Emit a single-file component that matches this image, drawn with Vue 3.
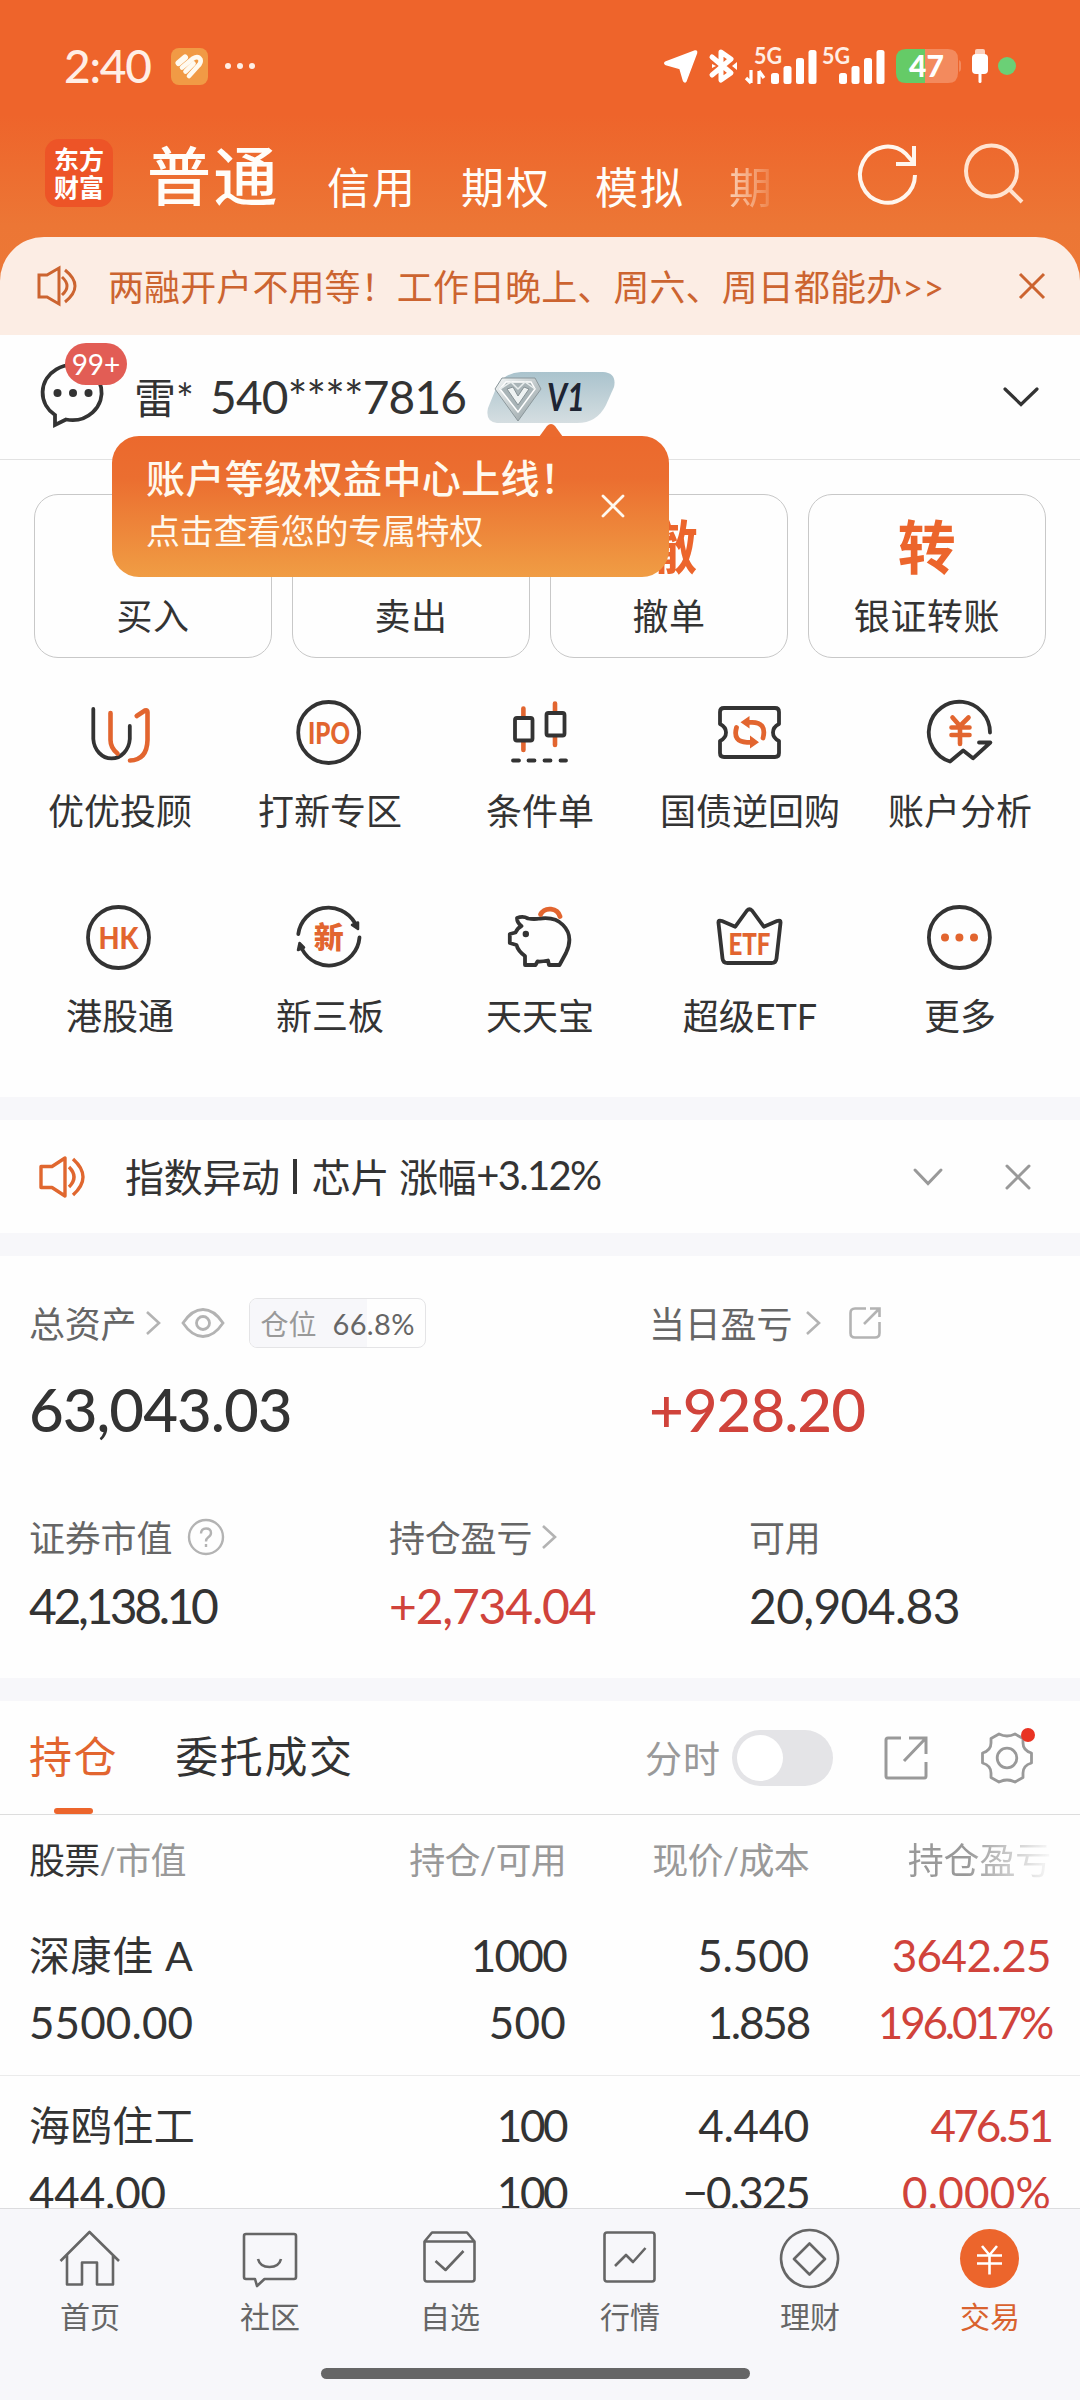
<template>
    <div class="page">
        <div class="top">
            <div class="status-bar">
                <span class="clock">2:40</span>
                <svg class="app-chip" width="37" height="37" viewBox="0 0 37 37">
                    <rect width="37" height="37" rx="8" fill="#f19a45" />
                    <g stroke="#fffaf0" stroke-width="4.6" stroke-linecap="round" fill="none">
                        <path d="M7.5 15 L14 9.5" stroke-width="6" />
                        <path d="M11 19.5 L22 10.5 Q27 7.500 29.500 11.500 Q30.500 15 27 18 L18 28" />
                        <path d="M14.500 23.500 L22.500 15.500" />
                    </g>
                </svg>
                <span class="dots"><i></i><i></i><i></i></span>
                <div class="spacer"></div>
                <svg width="36" height="36" viewBox="0 0 36 36">
                    <path d="M3 14 L32 3 Q34 2.500 33.500 5 L23 33 Q21.500 35 20.500 32.500 L17 20.500 L3 16.500 Q0.500 15 3 14Z" fill="#fff" stroke="#fff" stroke-width="1.500" />
                </svg>
                <svg class="bt" width="28" height="36" viewBox="0 0 28 36">
                    <path d="M3 9 L22 25 L12 32 V4 L22 11 L3 27" fill="none" stroke="#fff" stroke-width="5" stroke-linejoin="round" stroke-linecap="round" />
                    <path d="M3 16 l4 2 l-4 2z M28 14 v8 l-5 -4z" fill="#fff" />
                </svg>
                <svg class="signal" width="70" height="38" viewBox="0 0 70 38">
                    <text x="8" y="16.500" textLength="28" lengthAdjust="spacingAndGlyphs" class="net">5G</text>
                    <path d="M5 23 V36 M0 31 L5 36 M13 37 V24 M13 24 L18 31" stroke="#fff" stroke-width="3.200" fill="none" />
                    <g fill="#fff">
                        <rect v-for="b in bars" :key="b.x" :x="b.x + 25" :y="37 - b.h" width="8" :height="b.h" rx="2.500" />
                    </g>
                </svg>
                <svg class="signal second" width="63" height="38" viewBox="0 0 63 38">
                    <text x="0" y="16.500" textLength="28" lengthAdjust="spacingAndGlyphs" class="net">5G</text>
                    <g fill="#fff">
                        <rect v-for="b in bars" :key="b.x" :x="b.x + 17" :y="37 - b.h" width="8" :height="b.h" rx="2.500" />
                    </g>
                </svg>
                <svg class="battery" width="65" height="34" viewBox="0 0 65 34">
                    <path d="M29 0 H52 Q62 0 62 10 V24 Q62 34 52 34 H29Z M63 11 q2 1 2 3 v6 q0 2 -2 3z" fill="#f38a5d" />
                    <path d="M10 0 H29 V34 H10 Q0 34 0 24 V10 Q0 0 10 0Z" fill="#65cb67" />
                    <text x="13" y="27.500" textLength="35" lengthAdjust="spacingAndGlyphs" class="level">47</text>
                </svg>
                <svg class="plug" width="16" height="34" viewBox="0 0 16 34">
                    <rect x="3" y="0" width="10" height="7" rx="2" fill="#fbd0bd" />
                    <rect x="0" y="5" width="16" height="20" rx="4" fill="#fff" />
                    <rect x="6.500" y="24" width="3" height="10" rx="1.500" fill="#fff" />
                </svg>
                <span class="privacy"></span>
            </div>

            <div class="nav">
                <div class="logo"><span>东方</span><span>财富</span></div>
                <div class="modes">
                    <span class="mode active">普通</span>
                    <span v-for="m in modes" :key="m" class="mode">{{ m }}</span>
                    <span class="mode faded">期</span>
                </div>
                <div class="spacer"></div>
                <svg width="60" height="60" viewBox="0 0 60 60" fill="none" stroke="#fff6ee" stroke-width="4">
                    <path d="M57 31 A27.500 28 0 1 1 47.500 9.500 L55 18" />
                    <path d="M56 2 V20 H38" />
                </svg>
                <svg class="search" width="60" height="60" viewBox="0 0 60 60" fill="none" stroke="#ffe3d0" stroke-width="4">
                    <circle cx="27.500" cy="27" r="25.500" />
                    <path d="M45 45 L58 58" />
                </svg>
            </div>

            <div class="promo">
                <svg width="40" height="40" viewBox="0 0 40 40" fill="none" stroke="#cc6430" stroke-width="3">
                    <path d="M2 9 H10 L22 2 V38 L10 31 H2Z" />
                    <path d="M25 11 Q35 20 25 29 M28 4 Q48 20 28 36" />
                </svg>
                <span class="promo-text">两融开户不用等！工作日晚上、周六、周日都能办&gt;&gt;</span>
                <div class="spacer"></div>
                <svg width="26" height="26" viewBox="0 0 26 26" stroke="#cc6430" stroke-width="3">
                    <path d="M1 1 L25 25 M25 1 L1 25" />
                </svg>
            </div>
        </div>

        <div class="account">
            <div class="message">
                <svg width="64" height="64" viewBox="0 0 64 64">
                    <path d="M14 60 V50 A29.500 27.500 0 1 1 25 54.500 Z" fill="none" stroke="#333" stroke-width="3.800" stroke-linejoin="miter" />
                    <g fill="#333"><circle cx="16.500" cy="28" r="4" /><circle cx="32" cy="28" r="4" /><circle cx="47.500" cy="28" r="4" /></g>
                </svg>
                <span class="count">99+</span>
            </div>
            <span class="owner">雷*</span>
            <span class="number">540****7816</span>
            <svg class="vip" width="128" height="51" viewBox="0 0 128 51">
                <defs>
                    <linearGradient id="vipBg" x1="0" y1="0" x2="0" y2="1">
                        <stop offset="0" stop-color="#aac3cd" /><stop offset="1" stop-color="#d5dee1" />
                    </linearGradient>
                    <linearGradient id="gem" x1="0" y1="0" x2="1" y2="1">
                        <stop offset="0" stop-color="#f5f8f8" /><stop offset="1" stop-color="#8e9b9f" />
                    </linearGradient>
                </defs>
                <path d="M34 0H116Q130 1 127 15L119 33Q110 51 90 51H10Q-2 50 1 36L10 14Q17 1 34 0Z" fill="url(#vipBg)" />
                <path d="M15 6 H48 L54 17 L31 49 L8 17Z" fill="url(#gem)" stroke="#8b979b" stroke-width="1" />
                <path d="M19 10 H44 L48 17 L31 40 L13 17Z" fill="#a9b4b7" stroke="#fff" stroke-width="1.500" />
                <path d="M13 17 L24 10 L31 17 L38 10 L48 17" fill="none" stroke="#e9eeee" stroke-width="1.500" />
                <path d="M20 17 L26 15 L31 24 L37 15 L42 17 L31 33Z" fill="#eef2f2" stroke="#879296" stroke-width="1" />
                <text x="60" y="39" textLength="38" lengthAdjust="spacingAndGlyphs" class="vip-text">V1</text>
            </svg>
            <div class="spacer"></div>
            <svg width="36" height="20" viewBox="0 0 36 20" fill="none" stroke="#333" stroke-width="3.200" stroke-linecap="round">
                <path d="M2 2 L18 17.500 L34 2" />
            </svg>
            <div class="tip">
                <svg class="tip-arrow" width="24" height="13" viewBox="0 0 24 13"><path d="M0 13 L8 2 Q12 -2 16 2 L24 13Z" fill="#eb6a2e" /></svg>
                <div>
                    <div class="tip-title">账户等级权益中心上线！</div>
                    <div class="tip-sub">点击查看您的专属特权</div>
                </div>
                <svg class="tip-close" width="24" height="24" viewBox="0 0 24 24" stroke="#fff8ee" stroke-width="2.800" stroke-linecap="round">
                    <path d="M2 2 L22 22 M22 2 L2 22" />
                </svg>
            </div>
        </div>

        <div class="trades">
            <div v-for="t in trades" :key="t.label" class="trade">
                <b>{{ t.mark }}</b>
                <span>{{ t.label }}</span>
            </div>
        </div>

        <div class="tools">
            <div v-for="tool in tools" :key="tool.id" class="tool">
                <svg width="72" height="72" viewBox="0 0 72 72" fill="none" stroke="#333" stroke-width="3.800" stroke-linecap="round" stroke-linejoin="round">
                    <template v-if="tool.id === 'advisor'">
                        <path d="M10.300 13 V43 A18.300 21 0 0 0 46.800 43 V30" />
                        <path class="hot" stroke-width="4.600" d="M27.500 17 V44 Q27.500 52 34.500 57.500 M53.700 20 L62 14.500 Q64.500 13.500 64.500 16 V44 Q64 64 47 64.500" />
                    </template>
                    <template v-else-if="tool.id === 'ipo'">
                        <circle cx="35.700" cy="36.500" r="30.500" />
                        <text x="36" y="47.500" textLength="42" lengthAdjust="spacingAndGlyphs" class="glyph">IPO</text>
                    </template>
                    <template v-else-if="tool.id === 'cond'">
                        <path class="hot" stroke-width="4.600" d="M20.400 12.500 V20 M20.400 46 V54 M52 7.500 V15 M52 41 V49" />
                        <rect x="12" y="22" width="17.500" height="22.500" rx="2" />
                        <rect x="43.500" y="17" width="18" height="22.500" rx="2" />
                        <path d="M10 64.500 H16 M25.500 64.500 H31.500 M41.500 64.500 H47.500 M57.500 64.500 H63" />
                    </template>
                    <template v-else-if="tool.id === 'repo'">
                        <path d="M11 12 H62 Q66 12 66 16 V28 Q60 31 60 36.500 Q60 42 66 45 V57 Q66 61 62 61 H11 Q7 61 7 57 V45 Q13 42 13 36.500 Q13 31 7 28 V16 Q7 12 11 12Z" />
                        <path class="hot" stroke-width="4.800" d="M23.500 31.500 Q19.500 46 34 46.300 H38 M50 42 Q54 26.500 39 26.300 H35" />
                        <path class="fill" d="M37 39.500 L46 46.300 L37 52.500Z M36.500 20 L27.500 26.300 L36.500 32.500Z" />
                    </template>
                    <template v-else-if="tool.id === 'analysis'">
                        <path d="M67 36.500 A30.600 30.600 0 1 0 27 65.500 L40.200 54.500 L50 62.300 L67.400 46.500 H56" />
                        <path class="hot" stroke-width="4.600" d="M29.500 21.500 L37 30 L45.500 21.500 M37 30 V48 M28.500 31.500 H46.500 M28.500 39 H46.500" />
                    </template>
                    <template v-else-if="tool.id === 'hk'">
                        <circle cx="35.500" cy="36.500" r="30.500" />
                        <text x="35.500" y="47.500" textLength="40" lengthAdjust="spacingAndGlyphs" class="glyph">HK</text>
                    </template>
                    <template v-else-if="tool.id === 'neeq'">
                        <path d="M5.300 33 A30.500 30.500 0 0 1 62 22 M66.500 36.500 A30.500 30.500 0 0 1 9 48" />
                        <path d="M59 24 L65 21.500 L65 28Z M5 49 L6.500 42 L11 46.500Z" fill="#333" stroke-width="2.500" />
                        <text x="35.700" y="47" class="glyph cn">新</text>
                    </template>
                    <template v-else-if="tool.id === 'pig'">
                        <path d="M14 17 Q20 14.500 25 17.500 Q31 18.500 37 17.500 Q52 15.500 60 24 Q71 35 63 52 L56.500 64 H46 L45 59.500 Q38 61 34.500 60.500 L32.500 64 H22 V55 Q15 50 13.500 44 L6.800 42 V33 L12.500 31.500 Q14.500 27 18.500 25 Q14 22 14 17Z" />
                        <circle cx="22.800" cy="33" r="3.200" fill="#333" stroke="none" />
                        <path class="hot" stroke-width="4.800" d="M37.500 13.500 A10.500 10 0 0 1 57 15.500" />
                    </template>
                    <template v-else-if="tool.id === 'etf'">
                        <path d="M5.500 22 Q5 18.500 9 20 L22.300 25.700 L34 9.500 Q36.400 7 39 9.500 L50.800 25.700 L64 20 Q68 18.500 67.500 22 L63.500 57.500 Q63 62 58.500 62 H14.500 Q10 62 9.500 57.500Z" />
                        <text x="36.500" y="53.500" textLength="42" lengthAdjust="spacingAndGlyphs" class="glyph">ETF</text>
                    </template>
                    <template v-else>
                        <circle cx="36.400" cy="36.500" r="30.500" />
                        <path class="fill" d="M26 36.500 a4 4 0 1 0 -8 0 a4 4 0 1 0 8 0 M40.400 36.500 a4 4 0 1 0 -8 0 a4 4 0 1 0 8 0 M55 36.500 a4 4 0 1 0 -8 0 a4 4 0 1 0 8 0" />
                    </template>
                </svg>
                <span>{{ tool.label }}</span>
            </div>
        </div>

        <div class="alert">
            <svg width="48" height="42" viewBox="0 0 48 42" fill="none" stroke="#e0672f" stroke-width="3.400" stroke-linejoin="round">
                <path d="M4 10.500 H15 L28 2 V40 L15 31.500 H4Z" />
                <path d="M32 11 Q42 21 32 31 M36 3 Q56 21 36 39" />
            </svg>
            <span class="alert-text">指数异动<i class="bar"></i>芯片 涨幅<em>+3.12%</em></span>
            <div class="spacer"></div>
            <svg width="30" height="18" viewBox="0 0 30 18" fill="none" stroke="#999" stroke-width="3" stroke-linecap="round"><path d="M2 2 L15 15.500 L28 2" /></svg>
            <svg class="alert-close" width="26" height="26" viewBox="0 0 26 26" stroke="#999" stroke-width="3" stroke-linecap="round"><path d="M2 2 L24 24 M24 2 L2 24" /></svg>
        </div>

        <div class="assets">
            <div class="summary">
                <div class="total">
                    <div class="label">
                        <span>总资产</span>
                        <svg class="more" width="16" height="24" viewBox="0 0 16 24"><path d="M2 1 L14 12 L2 23" /></svg>
                        <svg class="eye" width="44" height="32" viewBox="0 0 44 32" fill="none" stroke="#b3b3b3" stroke-width="2.800">
                            <path d="M2 16 Q11 2.500 22 2.500 Q33 2.500 42 16 Q33 29.500 22 29.500 Q11 29.500 2 16Z" />
                            <circle cx="22" cy="16" r="6.500" />
                        </svg>
                        <span class="ratio">
                            <i class="ratio-fill" :style="{ width: ratio + '%' }"></i>
                            <span>仓位</span><em>{{ ratio }}%</em>
                        </span>
                    </div>
                    <div class="big">63,043.03</div>
                </div>
                <div class="daily">
                    <div class="label">
                        <span>当日盈亏</span>
                        <svg class="more wide" width="16" height="24" viewBox="0 0 16 24"><path d="M2 1 L14 12 L2 23" /></svg>
                        <svg class="share" width="32" height="32" viewBox="0 0 32 32" fill="none" stroke="#b3b3b3" stroke-width="2.600">
                            <path d="M17 1.500 H6 Q1.500 1.500 1.500 6 V26 Q1.500 30.500 6 30.500 H26 Q30.500 30.500 30.500 26 V15 M21 1.500 H30.500 V10 M30 2 L15 17" />
                        </svg>
                    </div>
                    <div class="big up">+928.20</div>
                </div>
            </div>
            <div class="details">
                <div>
                    <div class="label">
                        <span>证券市值</span>
                        <svg class="help" width="38" height="38" viewBox="0 0 38 38" fill="none" stroke="#b3b3b3" stroke-width="2.400">
                            <circle cx="19" cy="19" r="17" />
                            <path d="M14 15.500 Q14 10.500 19 10.500 Q24 10.500 24 15 Q24 17.500 21 19.500 Q19 21 19 23.500 M19 26 V29" />
                        </svg>
                    </div>
                    <div class="mid tight">42,138.10</div>
                </div>
                <div>
                    <div class="label">
                        <span>持仓盈亏</span>
                        <svg class="more" width="16" height="24" viewBox="0 0 16 24"><path d="M2 1 L14 12 L2 23" /></svg>
                    </div>
                    <div class="mid up">+2,734.04</div>
                </div>
                <div>
                    <div class="label"><span>可用</span></div>
                    <div class="mid loose">20,904.83</div>
                </div>
            </div>
        </div>

        <div class="tabs">
            <span class="tab on">持仓</span>
            <span class="tab">委托成交</span>
            <div class="spacer"></div>
            <span class="minute">分时</span>
            <span class="toggle" @click="minuteOn = !minuteOn"><i :class="{ right: minuteOn }"></i></span>
            <svg class="open" width="44" height="44" viewBox="0 0 44 44" fill="none" stroke="#999" stroke-width="3">
                <path d="M17 2 H4 Q2 2 2 4 V40 Q2 42 4 42 H40 Q42 42 42 40 V26 M25 2 H42 V18 M41 3 L20 25" />
            </svg>
            <span class="gear">
                <svg width="52" height="52" viewBox="0 0 52 52" fill="none" stroke="#999" stroke-width="2.800" stroke-linejoin="round">
                    <path d="M18 2 Q26 6 34 2 L42 6.500 V11 Q42 18.500 50.500 21 V31 Q42 33.500 42 41 V45.500 L34 50 Q26 46 18 50 L10 45.500 V41 Q10 33.500 1.500 31 V21 Q10 18.500 10 11 V6.500Z" />
                    <circle cx="26" cy="26" r="9.800" />
                </svg>
                <i></i>
            </span>
        </div>

        <div class="holdings">
            <div class="row head">
                <span><b>股票</b>/市值</span>
                <span>持仓/可用</span>
                <span>现价/成本</span>
                <span class="fade">持仓盈亏</span>
            </div>
            <div v-for="h in holdings" :key="h.name" class="holding">
                <div class="row">
                    <span class="name">{{ h.name }}</span>
                    <span :style="tracking(h.amount)">{{ h.amount }}</span>
                    <span :style="tracking(h.price)">{{ h.price }}</span>
                    <span class="up" :style="tracking(h.profit)">{{ h.profit }}</span>
                </div>
                <div class="row">
                    <span :style="tracking(h.value)">{{ h.value }}</span>
                    <span :style="tracking(h.usable)">{{ h.usable }}</span>
                    <span :style="tracking(h.cost)">{{ h.cost }}</span>
                    <span class="up" :style="tracking(h.rate)">{{ h.rate }}</span>
                </div>
            </div>
        </div>

        <div class="footer">
            <div class="menu">
                <div v-for="item in menu" :key="item.id" class="menu-item" :class="{ current: item.id === current }" @click="current = item.id">
                    <svg width="60" height="60" viewBox="0 0 60 60" fill="none" stroke="#666" stroke-width="2.600" stroke-linejoin="round">
                        <path v-if="item.id === 'home'" d="M0.500 32 L29.500 3 L59 32 M7 26 V55.500 H22 V33.500 H37 V55.500 H53 V26" />
                        <path v-else-if="item.id === 'club'" d="M6 5 H54 Q56 5 56 7 V48 Q56 50 54 50 H24.500 L17 57 L15 50 H6 Q4 50 4 48 V7 Q4 5 6 5Z M18 30 Q20 38 29.500 38 Q39 38 41 30" />
                        <path v-else-if="item.id === 'watch'" d="M4.500 12.500 H54.500 V50 Q54.500 52.500 52 52.500 H7 Q4.500 52.500 4.500 50 V12.500 L12 3.500 H47 L54.500 12.500 M15.500 32 L25.500 41 L43.500 22" />
                        <path v-else-if="item.id === 'market'" d="M7 3.500 H52 Q54.500 3.500 54.500 6 V50 Q54.500 52.500 52 52.500 H7 Q4.500 52.500 4.500 50 V6 Q4.500 3.500 7 3.500Z M15 37 L26 26 L33 33 L45.500 19" />
                        <path v-else-if="item.id === 'wealth'" d="M29.500 1 a28.500 28.500 0 1 0 0.100 0Z M29.500 14.500 L45 30 L29.500 45.500 L14 30Z" />
                        <g v-else>
                            <circle cx="29.500" cy="29.500" r="29.500" fill="#ec652c" stroke="none" />
                            <path d="M22 17 L29.500 26 L37 17 M29.500 26 V45.500 M17 26.500 H42 M17 34.500 H42" stroke="#fff" />
                        </g>
                    </svg>
                    <span>{{ item.label }}</span>
                </div>
            </div>
            <div class="home-bar"></div>
        </div>
    </div>
</template>

<script setup>
import { ref } from 'vue';

const ratio = 66.8;
const minuteOn = ref(false);
const current = ref('trade');

const bars = [
    { x: 0, h: 11 },
    { x: 12.5, h: 18 },
    { x: 25, h: 26 },
    { x: 37.5, h: 34 }
];

const modes = ['信用', '期权', '模拟'];

const trades = [
    { mark: '买', label: '买入' },
    { mark: '卖', label: '卖出' },
    { mark: '撤', label: '撤单' },
    { mark: '转', label: '银证转账' }
];

const tools = [
    { id: 'advisor', label: '优优投顾' },
    { id: 'ipo', label: '打新专区' },
    { id: 'cond', label: '条件单' },
    { id: 'repo', label: '国债逆回购' },
    { id: 'analysis', label: '账户分析' },
    { id: 'hk', label: '港股通' },
    { id: 'neeq', label: '新三板' },
    { id: 'pig', label: '天天宝' },
    { id: 'etf', label: '超级ETF' },
    { id: 'more', label: '更多' }
];

const holdings = [
    { name: '深康佳 A', value: '5500.00', amount: '1000', usable: '500', price: '5.500', cost: '1.858', profit: '3642.25', rate: '196.017%' },
    { name: '海鸥住工', value: '444.00', amount: '100', usable: '100', price: '4.440', cost: '−0.325', profit: '476.51', rate: '0.000%' }
];

const menu = [
    { id: 'home', label: '首页' },
    { id: 'club', label: '社区' },
    { id: 'watch', label: '自选' },
    { id: 'market', label: '行情' },
    { id: 'wealth', label: '理财' },
    { id: 'trade', label: '交易' }
];

const widths = { 0: 1.2, 1: -8, 7: -6, '−': -9 };
const tracking = (text) => {
    const extra = [...text].reduce((sum, c) => sum + (widths[c] || 0), 0);
    return { letterSpacing: (extra / text.length - 0.6).toFixed(2) + 'px' };
};
</script>

<style>
body {
    margin: 0;
    background: #ffffff;
}
</style>

<style scoped>
.page {
    width: 1080px;
    height: 2400px;
    display: flex;
    flex-direction: column;
    overflow: hidden;
    background: #fefefe;
    color: #333333;
    font-family: Lato, "Noto Sans CJK SC", sans-serif;
    font-size: 36px;
    white-space: nowrap;
}

.page > * {
    flex-shrink: 0;
    box-sizing: border-box;
}

svg {
    display: block;
    flex-shrink: 0;
    overflow: visible;
}

i,
em {
    font-style: normal;
}

.spacer {
    flex-grow: 1;
}

.up {
    color: #d0433b;
}

/* header */
.top {
    height: 335px;
    background: linear-gradient(#ee642b 0, #ee642b 115px, #ec7635 225px, #ed7a36 335px);
}

.status-bar {
    display: flex;
    align-items: center;
    height: 132px;
    padding: 0 64px 0 64px;
}

.clock {
    width: 107px;
    font-size: 46px;
    font-weight: 500;
    line-height: 60px;
    color: #ffeee5;
    letter-spacing: -1.2px;
}

.dots {
    display: flex;
    gap: 6px;
    margin-left: 17px;
}

.dots i {
    width: 6px;
    height: 6px;
    border-radius: 50%;
    background: #ffeee5;
}

.bt {
    margin-left: 10px;
}

.signal {
    margin-left: 9px;
}

.signal.second {
    margin-left: 6px;
}

.net {
    font-size: 23px;
    font-weight: bold;
    fill: #ffeee5;
}

.battery,
.plug {
    margin-left: 11px;
}

.level {
    font-size: 30px;
    font-weight: 900;
    fill: #ffffff;
}

.privacy {
    width: 18px;
    height: 18px;
    margin-left: 10px;
    border-radius: 50%;
    background: #6bd076;
}

.nav {
    display: flex;
    align-items: center;
    height: 105px;
    padding: 0 56px 22px 45px;
    box-sizing: border-box;
}

.logo {
    display: flex;
    flex-direction: column;
    justify-content: center;
    align-items: center;
    width: 68px;
    height: 68px;
    margin-bottom: 1px;
    border-radius: 14px;
    background: #ed5427;
    color: #ffffff;
    font-size: 25px;
    font-weight: bold;
    line-height: 28px;
}

.modes {
    display: flex;
    align-items: baseline;
    margin-left: 34px;
    padding-top: 7px;
    line-height: 80px;
    color: #fffdf9;
}

/* the small modes share one bottom edge with the large one */
.mode {
    margin-right: 44px;
    padding-top: 5px;
    font-size: 43px;
    letter-spacing: 2px;
    transform: translateY(4px);
}

.mode.active {
    margin-right: 47px;
    font-size: 64px;
    font-weight: 500;
    letter-spacing: 2.5px;
    transform: none;
}

.mode.faded {
    margin-right: 0;
    background: linear-gradient(90deg, rgba(255, 240, 225, 0.75), rgba(255, 240, 225, 0.1));
    background-clip: text;
    color: transparent;
}

.search {
    margin-left: 46px;
}

.promo {
    display: flex;
    align-items: center;
    height: 98px;
    padding: 0 35px 0 37px;
    border-radius: 44px 44px 0 0;
    background: #fcede4;
}

.promo-text {
    margin-left: 31px;
    padding-bottom: 2px;
    color: #cc6430;
    font-size: 36px;
    letter-spacing: 0.1px;
}

/* account */
.account {
    position: relative;
    display: flex;
    align-items: center;
    height: 125px;
    padding: 0 41px;
    border-bottom: 1px solid #e2e2e2;
}

.message {
    position: relative;
    width: 64px;
    margin-right: 29px;
}

.count {
    position: absolute;
    left: 24px;
    top: -22px;
    width: 62px;
    height: 42px;
    border-radius: 21px;
    background: #e25d55;
    color: #ffffff;
    font-size: 28px;
    line-height: 42px;
    text-align: center;
}

.owner {
    width: 76px;
    padding-bottom: 4px;
    font-size: 42px;
}

.number {
    width: 277px;
    padding-bottom: 1px;
    font-size: 46px;
    letter-spacing: -0.8px;
}

.vip-text {
    font-size: 39px;
    font-weight: bold;
    font-style: italic;
    fill: #1e2433;
}

.tip {
    position: absolute;
    z-index: 2;
    left: 112px;
    top: 101px;
    display: flex;
    box-sizing: border-box;
    width: 557px;
    height: 141px;
    padding: 16px 45px 0 34px;
    border-radius: 27px;
    background: linear-gradient(#eb692d 0, #eb6e30 30%, #f09d44 100%);
    color: #fff9ee;
}

.tip-arrow {
    position: absolute;
    left: 427px;
    top: -12px;
}

.tip-title {
    font-size: 39px;
    font-weight: 500;
    line-height: 52px;
    letter-spacing: 0.4px;
}

.tip-sub {
    font-size: 34px;
    line-height: 54px;
    letter-spacing: -0.3px;
}

.tip-close {
    position: absolute;
    right: 44px;
    top: 58px;
}

/* trade buttons */
.trades {
    display: grid;
    grid-template-columns: repeat(4, 1fr);
    gap: 20px;
    padding: 34px 34px 0;
}

.trade {
    display: flex;
    flex-direction: column;
    align-items: center;
    box-sizing: border-box;
    height: 164px;
    padding-top: 17px;
    border: 1px solid #c8c8c8;
    border-radius: 24px;
    line-height: 50px;
    letter-spacing: 0.6px;
    gap: 9px;
}

.trade b {
    color: #ec652c;
    font-size: 58px;
    line-height: 70px;
}

/* tools */
.tools {
    display: grid;
    grid-template-columns: repeat(5, 210px);
    grid-auto-rows: 205px;
    height: 439px;
    padding: 38px 14px 0;
}

.tool {
    display: flex;
    flex-direction: column;
    align-items: center;
    line-height: 50px;
    gap: 18px;
}

.tool span {
    padding-left: 2px;
}

.hot {
    stroke: #e2652f;
}

.fill {
    fill: #e2652f;
    stroke: none;
}

.glyph {
    font-size: 30px;
    font-weight: 900;
    fill: #e2652f;
    stroke: none;
    text-anchor: middle;
}

.glyph.cn {
    font-size: 30px;
}

/* index alert */
.alert {
    display: flex;
    align-items: center;
    height: 159px;
    padding: 0 49px 0 37px;
    border: solid #f7f7fa;
    border-width: 23px 0;
}

.alert-text {
    display: flex;
    align-items: center;
    margin-left: 40px;
    padding-bottom: 4px;
    font-size: 39px;
    letter-spacing: -0.3px;
    white-space: pre;
}

.bar {
    width: 4px;
    height: 35px;
    margin: 4px 15px 0 13px;
    background: #333333;
}

.alert-text em {
    font-size: 40px;
    letter-spacing: -1.7px;
}

.alert-close {
    margin-left: 62px;
}

/* assets */
.assets {
    height: 445px;
    padding: 42px 29px 0;
    border-bottom: 23px solid #f7f7fa;
}

.summary {
    display: grid;
    grid-template-columns: 620px 1fr;
}

.details {
    display: grid;
    grid-template-columns: 360px 360px 1fr;
    margin-top: 68px;
}

.label {
    display: flex;
    align-items: center;
    height: 50px;
    color: #666666;
}

.label > span:first-child {
    padding-bottom: 2px;
    letter-spacing: -0.2px;
}

.more {
    margin-left: 9px;
    fill: none;
    stroke: #b3b3b3;
    stroke-width: 2.6px;
}

.more.wide {
    margin-left: 13px;
}

.eye {
    margin-left: 20px;
}

.share {
    margin-left: 28px;
}

.help {
    margin-left: 15px;
}

.ratio {
    position: relative;
    display: flex;
    align-items: center;
    box-sizing: border-box;
    width: 177px;
    height: 50px;
    margin-left: 24px;
    padding-left: 10px;
    overflow: hidden;
    border: 1px solid #e4e4e6;
    border-radius: 8px;
    color: #999999;
    font-size: 28px;
}

.ratio-fill {
    position: absolute;
    left: 0;
    top: 0;
    height: 100%;
    background: #f7f7fa;
}

.ratio > :not(.ratio-fill) {
    position: relative;
}

.ratio em {
    margin-left: 16px;
    color: #666666;
    font-size: 29px;
    letter-spacing: 0.4px;
}

.big {
    margin-top: 24px;
    font-size: 60px;
    font-weight: 500;
    line-height: 74px;
    letter-spacing: -1px;
    margin-bottom: -2px;
}

.mid {
    margin-top: 12px;
    font-size: 48px;
    line-height: 64px;
    letter-spacing: -1.2px;
}

.mid.tight {
    letter-spacing: -3.4px;
}

.mid.loose {
    letter-spacing: -0.7px;
}

/* tabs */
.tabs {
    display: flex;
    align-items: center;
    height: 114px;
    padding: 0 47px 0 29px;
    border-bottom: 1px solid #dddddd;
}

.tab {
    position: relative;
    margin-right: 57px;
    font-size: 43px;
    line-height: 111px;
    padding-bottom: 2px;
    letter-spacing: 1.6px;
}

.tab.on {
    color: #e2652f;
}

.tab.on::after {
    content: "";
    position: absolute;
    left: 25px;
    bottom: 0;
    width: 39px;
    height: 6px;
    border-radius: 3px;
    background: #ec652c;
}

.minute {
    padding-bottom: 2px;
    color: #999999;
    font-size: 37px;
    letter-spacing: 1px;
}

.toggle {
    box-sizing: border-box;
    width: 101px;
    height: 56px;
    margin-left: 11px;
    padding: 5px;
    border-radius: 28px;
    background: #e4e4e7;
}

.toggle i {
    display: block;
    width: 46px;
    height: 46px;
    border-radius: 50%;
    background: #ffffff;
}

.toggle .right {
    margin-left: auto;
}

.open {
    margin-left: 51px;
}

.gear {
    position: relative;
    margin-left: 53px;
}

.gear i {
    position: absolute;
    right: -2px;
    top: -4px;
    width: 14px;
    height: 14px;
    border-radius: 50%;
    background: #e93323;
}

/* holdings */
.page > .holdings {
    flex: 1 1 0;
    min-height: 0;
    overflow: hidden;
}

.row {
    display: grid;
    grid-template-columns: 297px 240px 243px 242px;
    padding: 0 29px;
    font-size: 44px;
    line-height: 67px;
    text-align: right;
}

.row > :first-child {
    text-align: left;
}

.row.head {
    height: 91px;
    color: #999999;
    font-size: 36px;
    line-height: 91px;
    letter-spacing: -0.7px;
}

.head b {
    color: #333333;
    font-weight: normal;
}

.head .fade {
    background: linear-gradient(90deg, #999999 65%, rgba(153, 153, 153, 0.05) 100%);
    background-clip: text;
    color: transparent;
    letter-spacing: -0.2px;
}

.name {
    font-size: 41px;
    letter-spacing: 0.6px;
}

.holding {
    height: 170px;
    padding-top: 16px;
    box-sizing: border-box;
    border-bottom: 1px solid #ebebeb;
}

/* footer */
.footer {
    height: 192px;
    border-top: 1px solid #dcdcde;
    background: #f7f7fa;
}

.menu {
    display: grid;
    grid-template-columns: repeat(6, 180px);
    height: 159px;
    padding-top: 20px;
    box-sizing: border-box;
}

.menu-item {
    display: flex;
    flex-direction: column;
    align-items: center;
    color: #666666;
    font-size: 30px;
    line-height: 40px;
    gap: 7px;
}

.menu-item.current {
    color: #d9622e;
}

.home-bar {
    width: 429px;
    height: 11px;
    margin-left: 321px;
    border-radius: 6px;
    background: #666666;
}
</style>
